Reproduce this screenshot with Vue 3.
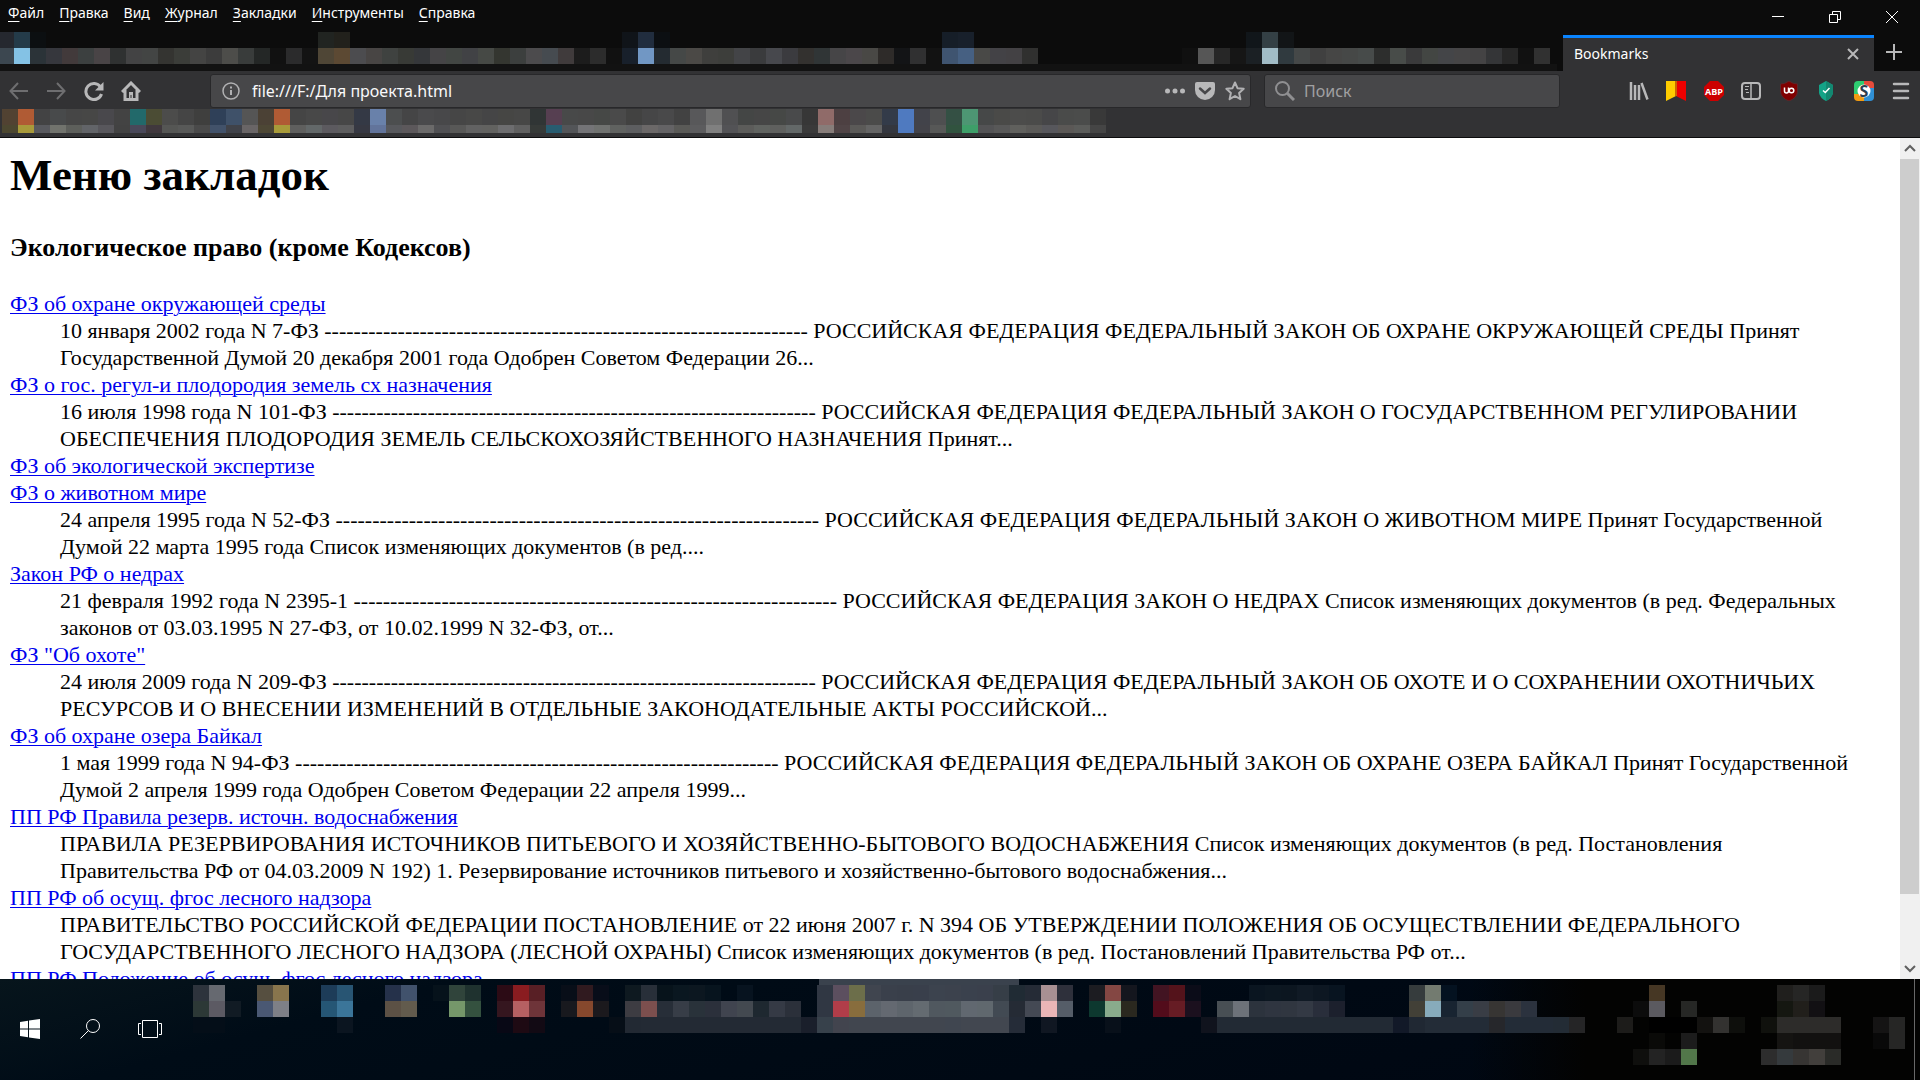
<script setup>
const menus = ['Файл', 'Правка', 'Вид', 'Журнал', 'Закладки', 'Инструменты', 'Справка']

const dashes = '-'.repeat(66)

const laws = [
  {
    title: 'ФЗ об охране окружающей среды',
    text: `10 января 2002 года N 7-ФЗ ${dashes} РОССИЙСКАЯ ФЕДЕРАЦИЯ ФЕДЕРАЛЬНЫЙ ЗАКОН ОБ ОХРАНЕ ОКРУЖАЮЩЕЙ СРЕДЫ Принят\nГосударственной Думой 20 декабря 2001 года Одобрен Советом Федерации 26...`,
  },
  {
    title: 'ФЗ о гос. регул-и плодородия земель сх назначения',
    text: `16 июля 1998 года N 101-ФЗ ${dashes} РОССИЙСКАЯ ФЕДЕРАЦИЯ ФЕДЕРАЛЬНЫЙ ЗАКОН О ГОСУДАРСТВЕННОМ РЕГУЛИРОВАНИИ\nОБЕСПЕЧЕНИЯ ПЛОДОРОДИЯ ЗЕМЕЛЬ СЕЛЬСКОХОЗЯЙСТВЕННОГО НАЗНАЧЕНИЯ Принят...`,
  },
  { title: 'ФЗ об экологической экспертизе' },
  {
    title: 'ФЗ о животном мире',
    text: `24 апреля 1995 года N 52-ФЗ ${dashes} РОССИЙСКАЯ ФЕДЕРАЦИЯ ФЕДЕРАЛЬНЫЙ ЗАКОН О ЖИВОТНОМ МИРЕ Принят Государственной\nДумой 22 марта 1995 года Список изменяющих документов (в ред....`,
  },
  {
    title: 'Закон РФ о недрах',
    text: `21 февраля 1992 года N 2395-1 ${dashes} РОССИЙСКАЯ ФЕДЕРАЦИЯ ЗАКОН О НЕДРАХ Список изменяющих документов (в ред. Федеральных\nзаконов от 03.03.1995 N 27-ФЗ, от 10.02.1999 N 32-ФЗ, от...`,
  },
  {
    title: 'ФЗ "Об охоте"',
    text: `24 июля 2009 года N 209-ФЗ ${dashes} РОССИЙСКАЯ ФЕДЕРАЦИЯ ФЕДЕРАЛЬНЫЙ ЗАКОН ОБ ОХОТЕ И О СОХРАНЕНИИ ОХОТНИЧЬИХ\nРЕСУРСОВ И О ВНЕСЕНИИ ИЗМЕНЕНИЙ В ОТДЕЛЬНЫЕ ЗАКОНОДАТЕЛЬНЫЕ АКТЫ РОССИЙСКОЙ...`,
  },
  {
    title: 'ФЗ об охране озера Байкал',
    text: `1 мая 1999 года N 94-ФЗ ${dashes} РОССИЙСКАЯ ФЕДЕРАЦИЯ ФЕДЕРАЛЬНЫЙ ЗАКОН ОБ ОХРАНЕ ОЗЕРА БАЙКАЛ Принят Государственной\nДумой 2 апреля 1999 года Одобрен Советом Федерации 22 апреля 1999...`,
  },
  {
    title: 'ПП РФ Правила резерв. источн. водоснабжения',
    text: 'ПРАВИЛА РЕЗЕРВИРОВАНИЯ ИСТОЧНИКОВ ПИТЬЕВОГО И ХОЗЯЙСТВЕННО-БЫТОВОГО ВОДОСНАБЖЕНИЯ Список изменяющих документов (в ред. Постановления\nПравительства РФ от 04.03.2009 N 192) 1. Резервирование источников питьевого и хозяйственно-бытового водоснабжения...',
  },
  {
    title: 'ПП РФ об осущ. фгос лесного надзора',
    text: 'ПРАВИТЕЛЬСТВО РОССИЙСКОЙ ФЕДЕРАЦИИ ПОСТАНОВЛЕНИЕ от 22 июня 2007 г. N 394 ОБ УТВЕРЖДЕНИИ ПОЛОЖЕНИЯ ОБ ОСУЩЕСТВЛЕНИИ ФЕДЕРАЛЬНОГО\nГОСУДАРСТВЕННОГО ЛЕСНОГО НАДЗОРА (ЛЕСНОЙ ОХРАНЫ) Список изменяющих документов (в ред. Постановлений Правительства РФ от...',
  },
  { title: 'ПП РФ Положение об осущ. фгос лесного надзора' },
]

// Each row is "column:colour colour …|column:colour …"; "*n" repeats a colour.
function cells(row) {
  const out = []
  for (const segment of row.split('|')) {
    const [start, colours] = segment.split(':')
    while (out.length < Number(start)) out.push('transparent')
    for (const item of colours.trim().split(/\s+/)) {
      const [colour, count = 1] = item.split('*')
      for (let i = 0; i < Number(count); i++) out.push('#' + colour)
    }
  }
  return out
}

const tabTiles = [
  '0:25282f 243b49 0c0f11|20:212421 22211c|39:101419 212d3e 0c0f12|59:161e28 18202b|78:11161a 344045 121517',
  '0:3c4750 84c2e5 2b3338 36373d 423a3b 3c4040 494446 2f3131 434344 434544 343431 3b3d39 444443 3c3c3c 4d4d4a 393c3b 242726 111111 2b2b2c 131313 4f4636 5c4933 4c4c4f 484544 3f4240 383a36 35373a 454446 424643 414245 464945 343630 3c3f3e 4c4b4d 464b50 403b3c 1c1c1c 2c2c2c 111111 18202b 7197c4 242b31 454847 4b4946 3f3f3d 3d3e3b 434447 3a3b3d 47484d 3b3b3f 33312f 303536 464547 4b474a 494845 2e2b29 131416 303031 121212 3f5470 466082 494947 434246 434144 30302f|74:101010 565656 272727 161616 1b2024 a1bcc6 303a3f 454848 404040 464645 464847 474b4a 2d2e2d 484c49 3a3a3b 434643 444548 464546 444344 343537 272727 111111 313131',
].map(cells)

const bookmarkTiles = [
  '0:514232 b05b34 434344 484a4b 464646 474746 49484c 434343 22696a 4b4c34 4c4c4b 454545 3f3f3e 2f4058 3f5169 555555 4b4135 b05b34 454545 484848 48474a 474747 343945 6981aa 4c4e4f 454546 4a4a4c 48484a 464646 484847 454546 464644 474746 303535 563f51 484949 484848 464846 4a4a4a 424241 464647 49494a 424242 58585a 707070 505052 444645 464646 464846 494a4b 373737 906b69 4d4042 4b484a 4b4b4a 333b49 4f7ac0 42434a 4e4f50 345044 4d9673 464848 4a4a48 4c4c4b 4b4b4a 464648 4a4b4a 4b4c4b 393939',
  '0:4c4730 a89a3b 58595e 71736d 5d5f5b 626468 58575c 424242 494859 40383d 555654 585958 4a4a4a 42526a 404249 696566 4d4735 a89b3a 5f5f5e 636869 5c5a5f 5d5d5e 363842 62749b 57585c 5c585b 6b6a6a 505053 585857 626262 626260 6d6d6f 606060 363a38 285c70 535558 747477 707270 606260 5d5e60 6b6868 646365 5a5a57 5c5c5e 808080 535356 5c5c5a 606360 5f605e 636868 3a3a3a 877d7a 504446 5b5a58 646464 34373f 4f7ac0 434349 575857 31533f 3e9f69 535355 585858 60605d 5b5a58 57575c 5b5856 5b5c5a 454545',
].map(cells)

const taskTiles = [
  '0:2d333c 666970|4:564f40 88754d|8:1d3c58 285573|12:25314a 41526c|15:06121b 30443b 1f322f|19:2c0b15 8a1c20 581f25|23:080e18 301a1f 080d19|27:0e1920 282f39 07131b 0a1720 0c1720 07141e|34:07131f|39:303743 5c4f5f 6c6e4a 40454f 3a404b 393f4a 393f4b 3c434e 3c424d 3a414d 3a404c 363e47 202b34 252b36 a89093 2e303b|56:1c1c21 844743 14161e|60:421422 54131b 0b0c18|66:0a1520 0c1721 0c1620 101a25 0d1722 081420|76:363c3d 737b70 041220|91:463724|99:201f1d 262625 1b1b1b',
  '0:2c3836 5c5a63 111b24|4:4a5873 7e8087|8:255675 3b7599|12:5c5145 625b4d|16:75976a 34513f|19:35161f b66062 6e3439|23:18191e 86482d 1b191d|27:3d3c42 7c4f4e 272e38 373d47 29323a 2b303b 40444f 434950 1e2830 353a45 2b303a|39:303743 b13d49 886d3d 5c636b 646971 5e656c 646b71 50585f 50595f 616870 60686e 424a53 252b35 444954 eab6b7 555d68|56:0d382f 89ab8c 2a281f|60:520c1b 661c24 1b101e|64:484f54 6d7279 2c333d 2f3540 303640 333944 292e3b 1c202d|76:424037 87abbb 182431 343f49 393d45 373533 3a3a3e 2b323e|90:0c0c0c 5b5a60|93:262725|99:151711 211f1b 121013',
  '0:040e18*2|9:0b1520|19:080815 1e0a13 120a14|26:060e17 222933 232a34*10 1a1f2b 37414b 42444e 41464f*6 404650 424750*3 252c38|53:101722|57:08101a|63:10131d 222a34*11 121928 202833 232c37*4 26272b 232c37*3 232c35 252526|89:1d1c1a|91:000000*3 131210 333230 0e0f0c|98:10110d 2d2c2a*4|105:151414 262625',
  '91:0a0a08|93:1c1c1c|99:151412 121110*3|105:090909 262625',
  '90:0f0f0d 232323 1b1b1b 52774a|98:2d2d2d 353a3d 373533 423f3c 2a2b28',
].map(cells)
</script>

<template>
  <div class="desktop">
    <header class="chrome">
      <div class="titlebar">
        <nav class="menus">
          <button v-for="m in menus" :key="m" type="button"><u>{{ m[0] }}</u>{{ m.slice(1) }}</button>
        </nav>
        <div class="window-controls">
          <button type="button" aria-label="Свернуть">
            <svg width="14" height="14" viewBox="0 0 14 14"><path d="M1 6.500h12" /></svg>
          </button>
          <button type="button" aria-label="Восстановить">
            <svg width="14" height="14" viewBox="0 0 14 14"><path d="M1.500 4.500h8v8h-8zM4.500 4.500v-3h8v8h-3" /></svg>
          </button>
          <button type="button" aria-label="Закрыть">
            <svg width="14" height="14" viewBox="0 0 14 14"><path d="M1 1l12 12M13 1L1 13" /></svg>
          </button>
        </div>
      </div>

      <div class="tabstrip">
        <div class="mosaic tabs-mosaic" aria-hidden="true">
          <div v-for="(row, r) in tabTiles" :key="r" class="tiles">
            <i v-for="(c, i) in row" :key="i" :style="{ background: c }"></i>
          </div>
          <div class="tabs-shade"></div>
        </div>
        <div class="tab">
          <span>Bookmarks</span>
          <button type="button" aria-label="Закрыть вкладку">
            <svg width="14" height="14" viewBox="0 0 14 14"><path d="M2 2l10 10M12 2L2 12" /></svg>
          </button>
        </div>
        <button class="new-tab" type="button" aria-label="Новая вкладка">
          <svg width="18" height="18" viewBox="0 0 18 18"><path d="M9 1v16M1 9h16" /></svg>
        </button>
      </div>

      <div class="toolbar">
        <div class="nav-buttons">
          <button type="button" class="dim" aria-label="Назад">
            <svg width="20" height="20" viewBox="0 0 20 20"><path d="M19 10H1.500M9 2L1.500 10L9 18" /></svg>
          </button>
          <button type="button" class="dim" aria-label="Вперёд">
            <svg width="20" height="20" viewBox="0 0 20 20"><path d="M1 10h17.500M11 2l7.500 8L11 18" /></svg>
          </button>
          <button type="button" aria-label="Обновить">
            <svg width="20" height="20" viewBox="0 0 20 20"><path class="bold" d="M16.500 6A8 8 0 1 0 17.500 13" /><path class="solid" d="M19.500 1v8.500H11z" /></svg>
          </button>
          <button type="button" aria-label="Домой">
            <svg width="20" height="20" viewBox="0 0 20 20"><path class="bold" d="M1 11L10 2l9 9M4 9v9.500h12V9" /><path class="solid" d="M8 11h4v8H8z" /><path d="M10 14v3" stroke="#323234" stroke-width="1" /></svg>
          </button>
        </div>
        <div class="field address">
          <svg width="18" height="18" viewBox="0 0 18 18"><circle cx="9" cy="9" r="8" stroke-width="1.500" /><path d="M9 8v5M9 4.500v2" /></svg>
          <input type="text" aria-label="Адрес" value="file:///F:/Для проекта.html" />
          <button type="button" aria-label="Действия">
            <svg width="20" height="20" viewBox="0 0 20 20"><g class="solid"><circle cx="2.500" cy="10" r="2.500" /><circle cx="10" cy="10" r="2.500" /><circle cx="17.500" cy="10" r="2.500" /></g></svg>
          </button>
          <button type="button" aria-label="Сохранить в Pocket">
            <svg width="20" height="20" viewBox="0 0 20 20"><path class="solid" d="M2 1h16q2 0 2 2v6a10 10 0 0 1-20 0V3q0-2 2-2z" /><path d="M5 7.500l5 4.500l5-4.500" stroke="#474749" stroke-width="2.500" stroke-linecap="round" /></svg>
          </button>
          <button type="button" aria-label="Добавить закладку">
            <svg width="20" height="20" viewBox="0 0 20 20"><path d="M10 1.500l2.500 5.700l6.200.6l-4.600 4.100l1.300 6.300L10 15l-5.400 3.200l1.300-6.300L1.300 7.800l6.200-.6z" stroke-linejoin="round" /></svg>
          </button>
        </div>
        <div class="field search">
          <svg width="20" height="20" viewBox="0 0 20 20"><circle cx="7.500" cy="7.500" r="6.500" /><path class="bold" d="M12 12l7 7" /></svg>
          <input type="text" aria-label="Поиск" placeholder="Поиск" />
        </div>
        <div class="extensions">
          <button type="button" aria-label="Библиотека">
            <svg width="20" height="20" viewBox="0 0 20 20"><path d="M2 1v18M6 4v15M10 4v15M12.500 2l6 16.500" stroke-width="2.500" /></svg>
          </button>
          <button type="button" aria-label="Закладки">
            <svg width="20" height="20" viewBox="0 0 20 20"><path d="M0 0h10v15L0 20z" fill="#fc0" stroke="none" /><path d="M10 0h10v20l-10-5z" fill="#e00" stroke="none" /><path d="M9 0h2v15H9z" fill="#c60" stroke="none" /></svg>
          </button>
          <button type="button" aria-label="Блокировщик рекламы">
            <svg width="20" height="20" viewBox="0 0 20 20"><path d="M6 0h8l6 6v8l-6 6H6l-6-6V6z" fill="#c00" stroke="none" /><text x="10" y="14" class="abp">ABP</text></svg>
          </button>
          <button type="button" aria-label="Боковая панель">
            <svg width="20" height="20" viewBox="0 0 20 20"><rect x="1" y="2" width="18" height="16" rx="3" /><path d="M10 2v16" stroke-width="1.500" /><path d="M4 5.500h4M4 8.500h3M5 11.500h3" stroke-width="1" /></svg>
          </button>
          <button type="button" aria-label="Защита">
            <svg width="20" height="20" viewBox="0 0 20 20"><path d="M10 0q4 3 8.500 3v7q0 7-8.500 10Q1.500 17 1.500 10V3Q6 3 10 0z" fill="#800000" stroke="#58292d" stroke-width="1" /><path d="M5.500 6.500v3.500a2 2 0 0 0 4 0V6.500" stroke="#fff" stroke-width="1.500" /><circle cx="12.500" cy="9.500" r="2.300" stroke="#fff" stroke-width="1.500" /></svg>
          </button>
          <button type="button" aria-label="Антивирус">
            <svg width="20" height="20" viewBox="0 0 20 20"><path d="M10 0l7 4v8q-1 5-7 8q-6-3-7-8V4z" fill="#14a387" stroke="none" /><path d="M10 0l7 4v8q-1 5-7 8z" fill="#138871" stroke="none" /><path d="M7 9.500l2.300 2L13.500 7" stroke="#fff" stroke-width="1.500" /></svg>
          </button>
          <button type="button" aria-label="Переводчик">
            <svg width="20" height="20" viewBox="0 0 20 20"><path d="M10 0H4Q0 0 0 4v9h10z" fill="#2ecc71" stroke="none" /><path d="M10 0h6q4 0 4 4v3H10z" fill="#e74c3c" stroke="none" /><path d="M20 7v9q0 4-4 4h-6V7z" fill="#3090d5" stroke="none" /><path d="M0 13v3q0 4 4 4h6v-7z" fill="#f39c12" stroke="none" /><circle cx="10" cy="10" r="6.500" fill="#fff" stroke="none" /><text x="10" y="16" class="s-mark">S</text></svg>
          </button>
          <button type="button" aria-label="Меню">
            <svg width="20" height="20" viewBox="0 0 20 20"><path d="M3 3h14M3 10h14M3 17h14" stroke-width="2.500" stroke-linecap="round" /></svg>
          </button>
        </div>
      </div>

      <div class="bookmarks-bar" aria-hidden="true">
        <div v-for="(row, r) in bookmarkTiles" :key="r" class="tiles">
          <i v-for="(c, i) in row" :key="i" :style="{ background: c }"></i>
        </div>
      </div>
    </header>

    <div class="viewport">
      <main class="document">
        <h1>Меню закладок</h1>
        <h3>Экологическое право (кроме Кодексов)</h3>
        <dl>
          <template v-for="law in laws" :key="law.title">
            <dt><a href="#">{{ law.title }}</a></dt>
            <dd v-if="law.text">{{ law.text }}</dd>
          </template>
        </dl>
      </main>
      <div class="scrollbar" aria-hidden="true">
        <svg width="20" height="21" viewBox="0 0 20 21"><path d="M5 13l5-5l5 5" /></svg>
        <div class="track"><div class="thumb"></div></div>
        <svg width="20" height="21" viewBox="0 0 20 21"><path d="M5 8l5 5l5-5" /></svg>
      </div>
    </div>

    <footer class="taskbar">
      <button type="button" aria-label="Пуск">
        <svg width="20" height="20" viewBox="0 0 20 20"><path d="M0 3l8-1.200V9.400H0zM9 1.600L20 0v9.400H9zM0 10.500h8v7.700L0 17zM9 10.500h11V20L9 18.400z" fill="#fff" stroke="none" /></svg>
      </button>
      <button type="button" aria-label="Поиск в Windows">
        <svg width="20" height="20" viewBox="0 0 20 20"><circle cx="13" cy="7" r="6.500" /><path d="M8.500 11.500L.5 19.500" /></svg>
      </button>
      <button type="button" aria-label="Представление задач">
        <svg width="24" height="20" viewBox="0 0 24 20"><path d="M4.500 1.500h15v17h-15zM3 4.500H.5v11H3M21 4.500h2.500v11H21" /></svg>
      </button>
      <div class="task-mosaic" aria-hidden="true">
        <div class="active-edge"></div>
        <div v-for="(row, r) in taskTiles" :key="r" class="tiles">
          <i v-for="(c, i) in row" :key="i" :style="{ background: c }"></i>
        </div>
      </div>
      <div class="show-desktop"></div>
    </footer>
  </div>
</template>

<style>
body {
  margin: 0;
  background: #000;
}
</style>

<style scoped>
.desktop {
  display: flex;
  flex-direction: column;
  height: 100vh;
  overflow: hidden;
  font-family: "Noto Sans", "Open Sans", sans-serif;
  font-size: 14px;
  color: #fff;
}
button {
  display: flex;
  align-items: center;
  justify-content: center;
  padding: 0;
  border: 0;
  background: none;
  color: inherit;
  font: inherit;
}
input {
  flex: 1;
  min-width: 0;
  padding: 0;
  border: 0;
  outline: 0;
  background: none;
  color: #f9f9fa;
  font: inherit;
}
svg {
  display: block;
  flex: none;
  fill: none;
  stroke: #b8b8b9;
  stroke-width: 2;
}
.bold {
  stroke-width: 3;
}
.solid {
  fill: #b8b8b9;
  stroke: none;
}
.chrome {
  flex: none;
  background: #0c0c0c;
  border-bottom: 1px solid #0c0c0d;
}
.titlebar {
  display: flex;
  justify-content: space-between;
  height: 32px;
}
.menus {
  display: flex;
  gap: 15px;
  height: 24px;
  padding-left: 8px;
}
.menus u {
  text-underline-offset: 3px;
}
.window-controls {
  display: flex;
  padding-top: 2px;
}
.window-controls button {
  width: 57px;
}
.window-controls svg {
  stroke: #fff;
  stroke-width: 1;
}
.tabstrip {
  display: flex;
  height: 39px;
}
.mosaic {
  flex: 1;
  min-width: 0;
  overflow: hidden;
}
.tiles {
  display: flex;
  height: 16px;
}
.tiles i {
  flex: none;
  width: 16px;
}
.tabs-mosaic .tiles {
  margin-left: -2px;
}
.tabs-shade {
  height: 7px;
  margin-right: 6px;
  background: #121212;
}
.tab {
  box-sizing: border-box;
  display: flex;
  align-items: center;
  justify-content: space-between;
  width: 311px;
  margin-top: 3px;
  padding: 0 14px 2px 11px;
  border-top: 3px solid #0a84ff;
  background: #323234;
}
.new-tab {
  width: 46px;
  padding-right: 6px;
}
.toolbar {
  display: flex;
  align-items: center;
  height: 36px;
  padding-top: 2px;
  background: #323234;
}
.nav-buttons {
  display: grid;
  grid-template-columns: repeat(4, 1fr);
  width: 150px;
  margin-right: 60px;
}
.dim {
  opacity: 0.45;
}
.field {
  box-sizing: border-box;
  display: flex;
  align-items: center;
  height: 34px;
  border: 1px solid #28282a;
  border-radius: 3px;
  background: #474749;
  font-size: 16px;
}
.address {
  flex: 1;
  gap: 10px;
  padding: 0 5px 0 11px;
}
.address svg {
  stroke: #b1b1b3;
}
.address input {
  padding-left: 2px;
}
.search {
  gap: 9px;
  width: 296px;
  margin: 0 60px 0 13px;
  padding-left: 10px;
}
.search svg {
  stroke: #8f8f91;
}
.search input::placeholder {
  color: #a0a0a2;
  opacity: 1;
}
.extensions {
  display: grid;
  grid-template-columns: repeat(8, 1fr);
  width: 300px;
}
.abp,
.s-mark {
  stroke: none;
  text-anchor: middle;
  font-family: "Open Sans", sans-serif;
  font-weight: 700;
}
.abp {
  fill: #fff;
  font-size: 9px;
}
.s-mark {
  fill: #2c3e50;
  font-size: 16px;
}
.bookmarks-bar {
  box-sizing: border-box;
  height: 28px;
  padding-left: 2px;
  overflow: hidden;
  background: #323234;
}
.bookmarks-bar .tiles:last-child {
  height: 8px;
}
.viewport {
  display: flex;
  flex: 1;
  min-height: 0;
  background: #fff;
}
.document {
  flex: 1;
  min-width: 0;
  padding: 10px;
  overflow: hidden;
  color: #000;
  font-family: "Liberation Serif", "Times New Roman", serif;
  font-size: 22px;
  line-height: 27px;
}
h1 {
  margin: 0;
  font-size: 45px;
  line-height: 54px;
}
h3 {
  margin: 30px 0 27px;
  font-size: 26px;
  line-height: 31px;
}
dl {
  margin: 0;
}
dd {
  margin: 0 0 0 50px;
  white-space: pre;
}
a {
  color: #00e;
  text-underline-offset: 2px;
  text-decoration-thickness: 1px;
}
.scrollbar {
  display: flex;
  flex-direction: column;
  width: 20px;
  background: #f0f0f0;
}
.scrollbar svg {
  stroke: #606060;
}
.track {
  flex: 1;
}
.thumb {
  height: 92%;
  margin-right: 1px;
  background: #cdcdcd;
}
.taskbar {
  display: flex;
  flex: none;
  height: 101px;
  background:
    linear-gradient(90deg, transparent calc(100% - 450px), #030302 calc(100% - 335px)),
    linear-gradient(165deg, #07151c, #000c17 20%, #000611);
}
.taskbar button {
  width: 60px;
  height: 100px;
}
.taskbar svg {
  stroke: #fff;
  stroke-width: 1;
}
.task-mosaic {
  flex: 1;
  min-width: 0;
  margin-left: 13px;
  overflow: hidden;
}
.active-edge {
  width: 200px;
  height: 6px;
  margin-left: 626px;
  background: #3a424d;
}
.show-desktop {
  width: 5px;
  border-left: 1px solid #686868;
}
</style>
